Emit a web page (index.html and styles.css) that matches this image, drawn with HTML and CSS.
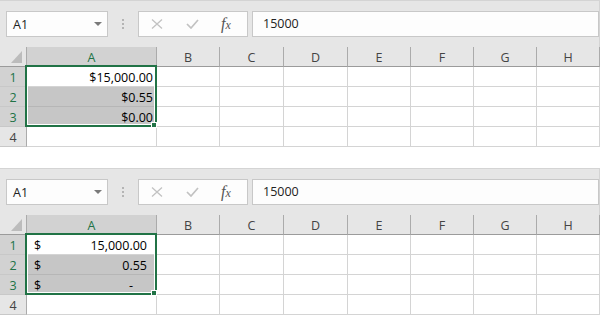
FILE: index.html
```html
<!DOCTYPE html>
<html>

<head>
    <title>Accounting Format</title>
    <link rel="stylesheet" href="styles.css">
</head>

<body>
    <div class="sheet">
        <div class="bar">
            <div class="namebox"><span>A1</span><span class="caret"></span></div>
            <div class="grip"><i></i><i></i><i></i></div>
            <div class="fxbox">
                <svg class="cancel" width="12" height="10" viewBox="0 0 12 10"><path d="M1 0.5L11 9.5M11 0.5L1 9.5" /></svg>
                <svg class="enter" width="13" height="10" viewBox="0 0 13 10"><path d="M1 5L5 9L12 1" /></svg>
                <span class="fx">f<span>x</span></span>
            </div>
            <div class="formula">15000</div>
        </div>
        <div class="grid">
            <div class="corner"><svg width="27" height="20"><polygon points="22,4 22,16 11,16" /></svg></div>
            <div class="ch sel">A</div><div class="ch">B</div><div class="ch">C</div><div class="ch">D</div>
            <div class="ch">E</div><div class="ch">F</div><div class="ch">G</div><div class="ch">H</div>

            <div class="rh sel">1</div><div class="c num">$15,000.00</div>
            <div class="c"></div><div class="c"></div><div class="c"></div><div class="c"></div><div class="c"></div><div class="c"></div><div class="c"></div>

            <div class="rh sel">2</div><div class="c num hl">$0.55</div>
            <div class="c"></div><div class="c"></div><div class="c"></div><div class="c"></div><div class="c"></div><div class="c"></div><div class="c"></div>

            <div class="rh sel">3</div><div class="c num hl">$0.00</div>
            <div class="c"></div><div class="c"></div><div class="c"></div><div class="c"></div><div class="c"></div><div class="c"></div><div class="c"></div>

            <div class="rh">4</div><div class="c"></div>
            <div class="c"></div><div class="c"></div><div class="c"></div><div class="c"></div><div class="c"></div><div class="c"></div><div class="c"></div>

            <div class="selection"></div>
            <div class="handle"></div>
        </div>
    </div>

    <div class="sheet">
        <div class="bar">
            <div class="namebox"><span>A1</span><span class="caret"></span></div>
            <div class="grip"><i></i><i></i><i></i></div>
            <div class="fxbox">
                <svg class="cancel" width="12" height="10" viewBox="0 0 12 10"><path d="M1 0.5L11 9.5M11 0.5L1 9.5" /></svg>
                <svg class="enter" width="13" height="10" viewBox="0 0 13 10"><path d="M1 5L5 9L12 1" /></svg>
                <span class="fx">f<span>x</span></span>
            </div>
            <div class="formula">15000</div>
        </div>
        <div class="grid">
            <div class="corner"><svg width="27" height="20"><polygon points="22,4 22,16 11,16" /></svg></div>
            <div class="ch sel">A</div><div class="ch">B</div><div class="ch">C</div><div class="ch">D</div>
            <div class="ch">E</div><div class="ch">F</div><div class="ch">G</div><div class="ch">H</div>

            <div class="rh sel">1</div><div class="c acc"><span>$</span><span>15,000.00</span></div>
            <div class="c"></div><div class="c"></div><div class="c"></div><div class="c"></div><div class="c"></div><div class="c"></div><div class="c"></div>

            <div class="rh sel">2</div><div class="c acc hl"><span>$</span><span>0.55</span></div>
            <div class="c"></div><div class="c"></div><div class="c"></div><div class="c"></div><div class="c"></div><div class="c"></div><div class="c"></div>

            <div class="rh sel">3</div><div class="c acc hl"><span>$</span><span class="dash">-</span></div>
            <div class="c"></div><div class="c"></div><div class="c"></div><div class="c"></div><div class="c"></div><div class="c"></div><div class="c"></div>

            <div class="rh">4</div><div class="c"></div>
            <div class="c"></div><div class="c"></div><div class="c"></div><div class="c"></div><div class="c"></div><div class="c"></div><div class="c"></div>

            <div class="selection"></div>
            <div class="handle"></div>
        </div>
    </div>
</body>

</html>
```

FILE: styles.css
```css
body {
    margin: 0;
    background: #fff;
    font-family: "Open Sans", "Noto Sans", sans-serif;
    font-size: 12.5px;
    color: #000;
}

.sheet {
    width: 600px;
    border-top: 1px solid #d4d4d4;
    background: #e6e6e6;
}

.sheet + .sheet {
    margin-top: 21px;
}

/* formula bar */

.bar {
    display: flex;
    align-items: flex-start;
    height: 46px;
    box-sizing: border-box;
    padding: 10px 0 0 6px;
    border-right: 1px solid #d4d4d4;
}

.namebox,
.fxbox,
.formula {
    height: 26px;
    box-sizing: border-box;
    border: 1px solid #c8c8c8;
    background: #fdfdfd;
    color: #222;
}

.namebox {
    width: 102px;
    display: flex;
    align-items: center;
    justify-content: space-between;
    padding: 0 5px 0 6px;
}

.caret {
    width: 0;
    height: 0;
    border-left: 4px solid transparent;
    border-right: 4px solid transparent;
    border-top: 4px solid #7a7a7a;
}

.grip {
    width: 30px;
    display: flex;
    flex-direction: column;
    align-items: center;
    gap: 2px;
    padding-top: 8px;
}

.grip i {
    width: 2px;
    height: 2px;
    background: #b4b4b4;
}

.fxbox {
    width: 110px;
    display: flex;
    align-items: center;
    padding-left: 12px;
}

.fxbox svg path {
    fill: none;
    stroke: #c2c2c2;
}

.cancel path {
    stroke-width: 1.3;
}

.enter {
    margin-left: 23px;
}

.enter path {
    stroke-width: 1.7;
}

.fx {
    margin-left: 22px;
    font-family: "Liberation Serif", serif;
    font-style: italic;
    font-size: 16px;
    line-height: 16px;
    color: #555;
}

.fx span {
    font-size: 12px;
}

.formula {
    flex: 1;
    margin-left: 4px;
    padding-left: 10px;
    line-height: 24px;
}

/* cells */

.grid {
    position: relative;
    display: grid;
    grid-template-columns: 27px 130px 63px 64px 64px 63px 63px 63px 63px;
    grid-auto-rows: 20px;
    background: #fff;
}

.grid > div {
    box-sizing: border-box;
    line-height: 19px;
    padding-top: 1px;
}

.corner,
.ch {
    background: #e6e6e6;
    border-right: 1px solid #ababab;
    border-bottom: 1px solid #9b9b9b;
}

.grid > .corner {
    padding-top: 0;
}

.corner polygon {
    fill: #bcbcbc;
}

.ch {
    text-align: center;
    color: #444;
}

.rh {
    background: #e6e6e6;
    border-right: 1px solid #ababab;
    border-bottom: 1px solid #c8c8c8;
    text-align: center;
    color: #444;
}

.sel {
    background: #d2d2d2;
    color: #217346;
}

.c {
    border-right: 1px solid #d4d4d4;
    border-bottom: 1px solid #d4d4d4;
}

.hl {
    background: #c6c6c6;
    border-bottom-color: #b6b6b6;
}

.num {
    text-align: right;
    padding-right: 3px;
}

.acc {
    display: flex;
    justify-content: space-between;
    padding: 0 9px 0 7px;
}

.dash {
    padding-right: 14px;
}

.grid > .selection,
.grid > .handle {
    position: absolute;
    padding: 0;
}

.selection {
    left: 25px;
    top: 18px;
    width: 132px;
    height: 62px;
    border: 2px solid #217346;
    box-shadow: inset 0 0 0 1px #fff;
}

.handle {
    left: 151px;
    top: 75px;
    width: 6px;
    height: 6px;
    background: #217346;
    border: 1px solid #fff;
}
```
